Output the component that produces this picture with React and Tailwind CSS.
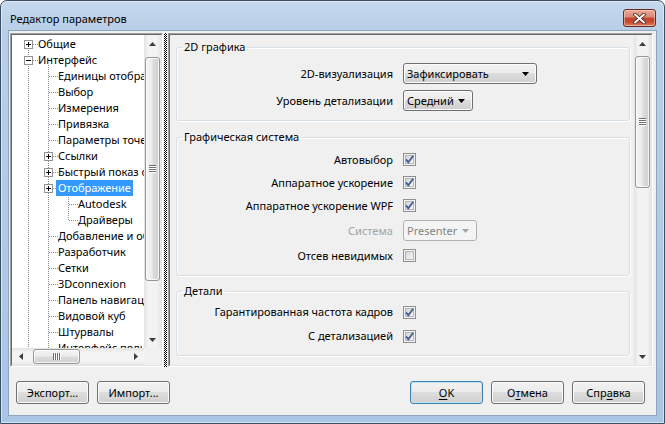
import React from "react";

const font = "font-['Noto_Sans','DejaVu_Sans',sans-serif]";

const treeRows = [
  { t: "Общие", l: 0, exp: "+" },
  { t: "Интерфейс", l: 0, exp: "-" },
  { t: "Единицы отображения", l: 1 },
  { t: "Выбор", l: 1 },
  { t: "Измерения", l: 1 },
  { t: "Привязка", l: 1 },
  { t: "Параметры точек обзора", l: 1 },
  { t: "Ссылки", l: 1, exp: "+" },
  { t: "Быстрый показ свойств", l: 1, exp: "+" },
  { t: "Отображение", l: 1, exp: "+", sel: true },
  { t: "Autodesk", l: 2 },
  { t: "Драйверы", l: 2 },
  { t: "Добавление и обновление", l: 1 },
  { t: "Разработчик", l: 1 },
  { t: "Сетки", l: 1 },
  { t: "3Dconnexion", l: 1 },
  { t: "Панель навигации", l: 1 },
  { t: "Видовой куб", l: 1 },
  { t: "Штурвалы", l: 1 },
  { t: "Интерфейс пользователя", l: 1 },
];

const indent = { 0: "pl-[24px]", 1: "pl-[44px]", 2: "pl-[64px]" };

function Arrow({ dir, color = "#3c3c3c" }) {
  const vertical = dir === "up" || dir === "down";
  const pts = {
    up: "0,4 3.5,0 7,4",
    down: "0,0 7,0 3.5,4",
    left: "4,0 4,7 0,3.5",
    right: "0,0 0,7 4,3.5",
  }[dir];
  return (
    <svg width={vertical ? 7 : 4} height={vertical ? 4 : 7} viewBox={vertical ? "0 0 7 4" : "0 0 4 7"}>
      <polygon points={pts} fill={color} />
    </svg>
  );
}

function Grip({ horizontal }) {
  const bars = [0, 2, 4, 6];
  return (
    <svg width="8" height="8" viewBox="0 0 8 8" shapeRendering="crispEdges">
      {bars.map((p) =>
        horizontal ? (
          <g key={p}>
            <rect x={p} y="0" width="1" height="7" fill="#6e6e6e" />
            <rect x={p + 1} y="0" width="1" height="7" fill="#ffffff" />
          </g>
        ) : (
          <g key={p}>
            <rect x="0" y={p} width="7" height="1" fill="#6e6e6e" />
            <rect x="0" y={p + 1} width="7" height="1" fill="#ffffff" />
          </g>
        )
      )}
    </svg>
  );
}

function VScroll({ gap, thumb }) {
  return (
    <div className="w-[17px] h-full shrink-0 flex flex-col bg-[linear-gradient(to_right,#e3e3e3,#f3f3f3_25%,#f3f3f3_75%,#e6e6e6)]">
      <div className="h-[17px] shrink-0 flex items-center justify-center">
        <Arrow dir="up" />
      </div>
      <div className={`${gap} shrink-0`} />
      <div
        className={`${thumb} shrink-0 mx-[1px] rounded-[3px] border border-[#969696] shadow-[inset_0_0_0_1px_rgba(255,255,255,0.8)] bg-[linear-gradient(to_right,#f4f4f4,#ececec_45%,#dcdcdc_55%,#d0d0d0)] flex items-center justify-center`}
      >
        <Grip />
      </div>
      <div className="flex-1" />
      <div className="h-[17px] shrink-0 flex items-center justify-center">
        <Arrow dir="down" />
      </div>
    </div>
  );
}

function HScroll() {
  return (
    <div className="h-[17px] flex-1 flex bg-[linear-gradient(to_bottom,#e3e3e3,#f3f3f3_25%,#f3f3f3_75%,#e6e6e6)]">
      <div className="w-[17px] shrink-0 flex items-center justify-center">
        <Arrow dir="left" />
      </div>
      <div className="w-[4px] shrink-0" />
      <div className="w-[47px] shrink-0 my-[1px] rounded-[3px] border border-[#969696] shadow-[inset_0_0_0_1px_rgba(255,255,255,0.8)] bg-[linear-gradient(to_bottom,#f4f4f4,#ececec_45%,#dcdcdc_55%,#d0d0d0)] flex items-center justify-center">
        <Grip horizontal />
      </div>
      <div className="flex-1" />
      <div className="w-[17px] shrink-0 flex items-center justify-center">
        <Arrow dir="right" />
      </div>
    </div>
  );
}

function TreeLines() {
  const cy = (i) => 9 + 16 * i;
  const cx = (l) => 16 + 20 * l;
  const line = { stroke: "#8c8c8c", strokeDasharray: "1 1" };
  return (
    <svg className="absolute left-0 top-0 pointer-events-none" width="132" height="313" shapeRendering="crispEdges">
      <line x1="16.5" y1={cy(0)} x2="16.5" y2="313" {...line} />
      <line x1="36.5" y1={cy(1) + 5} x2="36.5" y2="313" {...line} />
      <line x1="56.5" y1={cy(9) + 5} x2="56.5" y2={cy(11) + 1} {...line} />
      {treeRows.map((r, i) => (
        <line key={"h" + i} x1={cx(r.l) + 1} y1={cy(i) + 0.5} x2={cx(r.l) + 10} y2={cy(i) + 0.5} {...line} />
      ))}
      {treeRows.map((r, i) =>
        r.exp ? (
          <g key={"b" + i}>
            <rect x={cx(r.l) - 3.5} y={cy(i) - 3.5} width="8" height="8" fill="#fff" stroke="#929292" />
            <rect x={cx(r.l) - 2} y={cy(i)} width="5" height="1" fill="#000" />
            {r.exp === "+" && <rect x={cx(r.l)} y={cy(i) - 2} width="1" height="5" fill="#000" />}
          </g>
        ) : null
      )}
    </svg>
  );
}

function Tree() {
  return (
    <div className="w-[153px] h-full shrink-0 border border-t-[#a0a0a0] border-l-[#a0a0a0] border-r-white border-b-white">
      <div className="h-full flex flex-col border border-t-[#696969] border-l-[#696969] border-r-[#e3e3e3] border-b-[#e3e3e3] bg-white">
        <div className="flex-1 flex min-h-0">
          <div className="relative flex-1 overflow-hidden pt-[1px]">
            <TreeLines />
            {treeRows.map((r) => (
              <div key={r.t} className={`relative h-[16px] flex items-center whitespace-nowrap ${indent[r.l]}`}>
                <span
                  className={`px-[2px] h-[16px] text-[11px] leading-[16px] ${
                    r.sel ? "bg-[#3399ff] text-white" : "text-black"
                  }`}
                >
                  {r.t}
                </span>
              </div>
            ))}
          </div>
          <VScroll gap="h-[5px]" thumb="h-[224px]" />
        </div>
        <div className="h-[17px] shrink-0 flex">
          <HScroll />
          <div className="w-[17px] bg-[#f0f0f0]" />
        </div>
      </div>
    </div>
  );
}

function Combo({ value, w, disabled }) {
  return (
    <div
      className={`${w} h-[21px] rounded-[3px] border flex items-center justify-between pl-[3px] pr-[7px] text-[11px] leading-[16px] ${
        disabled
          ? "border-[#adb2b5] bg-[#f4f4f4] text-[#838383]"
          : "border-[#707070] text-black shadow-[inset_0_0_0_1px_#fbfbfb] bg-[linear-gradient(to_bottom,#f2f2f2_0%,#ebebeb_50%,#dddddd_50%,#cfcfcf_100%)]"
      }`}
    >
      <span>{value}</span>
      <Arrow dir="down" color={disabled ? "#a5a5a5" : "#000"} />
    </div>
  );
}

function Check({ on }) {
  return (
    <svg width="13" height="13" viewBox="0 0 13 13">
      <defs>
        <linearGradient id="cbfill" x1="0" y1="0" x2="1" y2="1">
          <stop offset="0" stopColor="#d2d2d2" />
          <stop offset="1" stopColor="#fbfbfb" />
        </linearGradient>
      </defs>
      <rect x="0.5" y="0.5" width="12" height="12" fill="#f4f4f4" stroke="#8e8f8f" />
      <rect x="2.5" y="2.5" width="8" height="8" fill="url(#cbfill)" stroke="#b2b6ba" />
      {on && <path d="M3 6.4 L5.3 9.2 L10.2 2.8" fill="none" stroke="#415b97" strokeWidth="1.8" />}
    </svg>
  );
}

function Row({ label, h, muted, children }) {
  return (
    <div className={`${h} flex items-center`}>
      <div className={`w-[216px] text-right text-[11px] leading-[16px] ${muted ? "text-[#a3a3a3]" : "text-black"}`}>
        {label}
      </div>
      <div className="ml-[10px] flex items-center">{children}</div>
    </div>
  );
}

function Group({ title, className, children }) {
  return (
    <fieldset
      className={`ml-[6px] mr-[4px] border border-[#d5dfe5] rounded-[3px] shadow-[inset_1px_1px_0_#fff,1px_1px_0_#fff] ${className}`}
    >
      <legend className="ml-[5px] px-[2px] text-[11px] leading-[16px] text-black">{title}</legend>
      {children}
    </fieldset>
  );
}

function Options() {
  return (
    <div className="flex-1 min-w-0 h-full border border-t-[#a0a0a0] border-l-[#a0a0a0] border-r-white border-b-white">
      <div className="h-full flex border border-t-[#696969] border-l-[#696969] border-r-[#e3e3e3] border-b-[#e3e3e3]">
        <div className="flex-1 min-w-0 overflow-hidden">
          <Group title="2D графика" className="mt-[4px] pt-[5px] pb-[6px]">
            <Row label="2D-визуализация" h="h-[27px]">
              <Combo value="Зафиксировать" w="w-[134px]" />
            </Row>
            <Row label="Уровень детализации" h="h-[27px]">
              <Combo value="Средний" w="w-[70px]" />
            </Row>
          </Group>
          <Group title="Графическая система" className="mt-[8px] pt-[3px] pb-[8px]">
            <Row label="Автовыбор" h="h-[23px]">
              <Check on />
            </Row>
            <Row label="Аппаратное ускорение" h="h-[23px]">
              <Check on />
            </Row>
            <Row label="Аппаратное ускорение WPF" h="h-[23px]">
              <Check on />
            </Row>
            <Row label="Система" h="h-[27px]" muted>
              <Combo value="Presenter" w="w-[74px]" disabled />
            </Row>
            <Row label="Отсев невидимых" h="h-[23px]">
              <Check />
            </Row>
          </Group>
          <Group title="Детали" className="mt-[7px] pt-[1px] pb-[7px]">
            <Row label="Гарантированная частота кадров" h="h-[24px]">
              <Check on />
            </Row>
            <Row label="С детализацией" h="h-[24px]">
              <Check on />
            </Row>
          </Group>
        </div>
        <VScroll gap="h-[4px]" thumb="h-[132px]" />
      </div>
    </div>
  );
}

function Button({ children, primary }) {
  return (
    <button
      className={`w-[73px] h-[23px] rounded-[3px] border text-[11px] leading-[16px] text-black bg-[linear-gradient(to_bottom,#f2f2f2_0%,#ebebeb_50%,#dddddd_50%,#cfcfcf_100%)] ${
        primary
          ? "border-[#3c7fb1] shadow-[inset_0_0_0_1px_#bde6fb]"
          : "border-[#707070] shadow-[inset_0_0_0_1px_#fbfbfb]"
      }`}
    >
      {children}
    </button>
  );
}

function CloseButton() {
  return (
    <div className="mt-[8px] mr-[1px] w-[33px] h-[18px] rounded-[3px] border border-[#6b2a20] shadow-[inset_0_0_0_1px_rgba(255,210,200,0.55)] bg-[linear-gradient(to_bottom,#e9ab9b_0%,#d9876f_45%,#c2442c_50%,#c44a32_75%,#dc8467_100%)] flex items-center justify-center">
      <svg width="13" height="11" viewBox="0 0 13 11">
        <path d="M2 1.5 L11 9.5 M11 1.5 L2 9.5" stroke="#4a1a12" strokeWidth="3.6" strokeLinecap="round" />
        <path d="M2 1.5 L11 9.5 M11 1.5 L2 9.5" stroke="#ffffff" strokeWidth="2" strokeLinecap="round" />
      </svg>
    </div>
  );
}

export default function App() {
  return (
    <div
      className={`w-[665px] h-[424px] ${font} flex flex-col rounded-t-[7px] border border-[#3b4e63] shadow-[inset_0_0_0_1px_rgba(255,255,255,0.5)] bg-[linear-gradient(to_bottom,#c5d8ed_0px,#b9cfe8_30px,#a9c5e4_100%)] px-[7px] pb-[7px]`}
    >
      <div className="h-[29px] shrink-0 flex items-start justify-between">
        <div className="pl-[2px] pt-[10px] text-[11px] leading-[16px] text-black">Редактор параметров</div>
        <CloseButton />
      </div>
      <div className="flex-1 flex flex-col bg-[#f0f0f0] border border-[#8ea5be]">
        <div className="h-[334px] mt-[2px] ml-[1px] mr-[3px] flex">
          <Tree />
          <div className="w-[5px] shrink-0 px-[1px]">
            <div className="h-full w-[3px] bg-[repeating-conic-gradient(#000_0%_25%,#fff_0%_50%)] bg-[length:2px_2px]" />
          </div>
          <Options />
        </div>
        <div className="flex-1 flex items-start justify-between pt-[14px] pl-[7px] pr-[11px]">
          <div className="flex gap-[8px]">
            <Button>Экспорт...</Button>
            <Button>Импорт...</Button>
          </div>
          <div className="flex gap-[8px]">
            <Button primary>
              <span className="underline underline-offset-2">O</span>K
            </Button>
            <Button>
              О<span className="underline underline-offset-2">т</span>мена
            </Button>
            <Button>
              Спр<span className="underline underline-offset-2">а</span>вка
            </Button>
          </div>
        </div>
      </div>
    </div>
  );
}
